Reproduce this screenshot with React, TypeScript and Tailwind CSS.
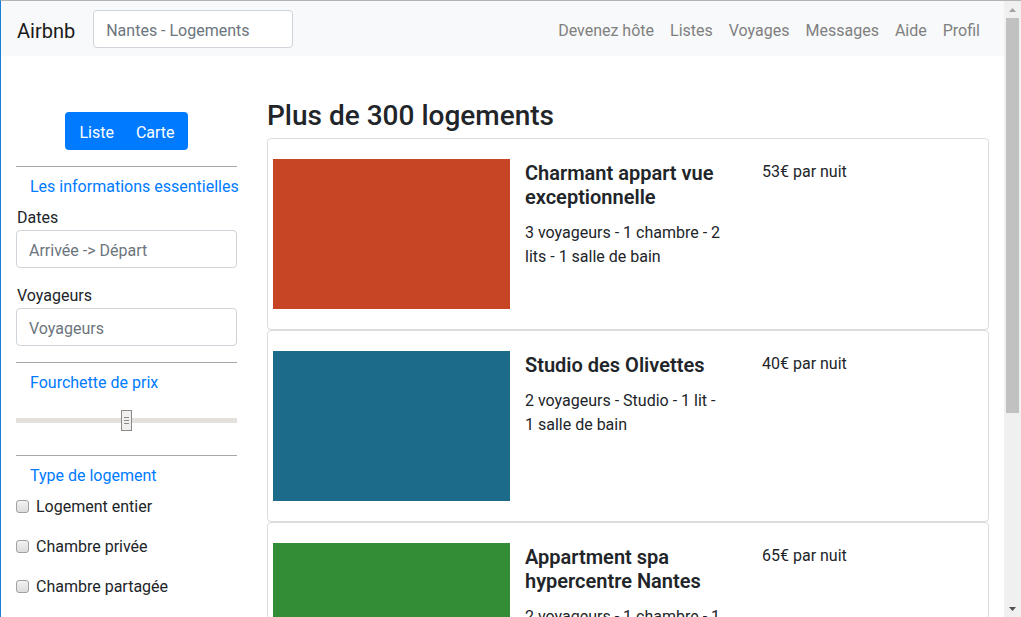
import React from "react";

const listings = [
  {
    title: "Charmant appart vue exceptionnelle",
    details: "3 voyageurs - 1 chambre - 2 lits - 1 salle de bain",
    price: "53€ par nuit",
    color: "bg-[#c74525]",
  },
  {
    title: "Studio des Olivettes",
    details: "2 voyageurs - Studio - 1 lit - 1 salle de bain",
    price: "40€ par nuit",
    color: "bg-[#1d6b8a]",
  },
  {
    title: "Appartment spa hypercentre Nantes",
    details: "2 voyageurs - 1 chambre - 1 lit - 1 salle de bain",
    price: "65€ par nuit",
    color: "bg-[#338c36]",
  },
];

const navLinks = ["Devenez hôte", "Listes", "Voyages", "Messages", "Aide", "Profil"];

function Navbar() {
  return (
    <nav className="flex h-[55px] shrink-0 items-center bg-[#f8f9fa] px-4">
      <span className="mr-[18px] pt-[4px] text-[20px] leading-[30px] text-[#1a1a1a]">Airbnb</span>
      <div className="flex h-[38px] w-[200px] items-center rounded border border-[#ced4da] bg-white px-3 pt-[4px] text-[#6c757d]">
        Nantes - Logements
      </div>
      <ul className="ml-auto flex">
        {navLinks.map((link) => (
          <li key={link} className="px-2 pt-[4px] text-[#808080]">
            {link}
          </li>
        ))}
      </ul>
    </nav>
  );
}

function SectionTitle({ children }: { children: React.ReactNode }) {
  return <div className="whitespace-nowrap pl-[14px] pt-px text-[#007bff]">{children}</div>;
}

function Checkbox({ label }: { label: string }) {
  return (
    <label className="flex h-[40px] items-start">
      <span className="mt-[4px] h-[13px] w-[13px] rounded-[3px] border border-[#a0a0a0] bg-gradient-to-b from-[#f2f2f2] to-[#dcdcdc]" />
      <span className="ml-[7px] leading-[21px] text-[#212529]">{label}</span>
    </label>
  );
}

function Sidebar() {
  return (
    <aside className="w-[221px] shrink-0 pt-[56px]">
      <div className="flex justify-center">
        <div className="flex h-[38px] items-center rounded bg-[#007bff] pt-[4px] text-white">
          <span className="pl-[14px] pr-[12px]">Liste</span>
          <span className="pl-[10px] pr-[13px]">Carte</span>
        </div>
      </div>
      <hr className="mt-4 border-t border-[#a8a8a8]" />
      <div className="pt-[7px]">
        <SectionTitle>Les informations essentielles</SectionTitle>
        <div className="mt-[7px] pl-px leading-[24px]">Dates</div>
        <div className="flex h-[38px] items-center rounded border border-[#ced4da] px-3 pt-[4px] text-[#6c757d]">
          Arrivée -&gt; Départ
        </div>
        <div className="mt-[16px] pl-px leading-[24px]">Voyageurs</div>
        <div className="flex h-[38px] items-center rounded border border-[#ced4da] px-3 pt-[4px] text-[#6c757d]">
          Voyageurs
        </div>
      </div>
      <hr className="mt-4 border-t border-[#a8a8a8]" />
      <div className="pt-[7px]">
        <SectionTitle>Fourchette de prix</SectionTitle>
        <div className="relative mt-[15px] h-[21px]">
          <div className="absolute left-0 right-0 top-[8px] h-[5px] bg-[#e4e1dc]" />
          <div className="absolute left-[105px] top-0 flex h-[21px] w-[11px] flex-col items-center justify-center gap-[2px] border border-[#8c8a88] bg-[#f0efed]">
            <span className="h-px w-[5px] bg-[#8c8a88]" />
            <span className="h-px w-[5px] bg-[#8c8a88]" />
            <span className="h-px w-[5px] bg-[#8c8a88]" />
          </div>
        </div>
      </div>
      <hr className="mt-[24px] border-t border-[#a8a8a8]" />
      <div className="pt-[7px]">
        <SectionTitle>Type de logement</SectionTitle>
        <div className="mt-[8px]">
          <Checkbox label="Logement entier" />
          <Checkbox label="Chambre privée" />
          <Checkbox label="Chambre partagée" />
        </div>
      </div>
    </aside>
  );
}

function ListingCard({ title, details, price, color }: (typeof listings)[number]) {
  return (
    <div className="flex h-[192px] shrink-0 items-start rounded border border-[#dcdcdc] pl-[5px] pt-[20px]">
      <div className={`h-[150px] w-[237px] shrink-0 ${color}`} />
      <div className="ml-[15px] w-[202px] shrink-0 pt-[2px]">
        <h5 className="text-[20px] font-semibold leading-[24px] text-[#212529]">{title}</h5>
        <p className="mt-[12px] leading-[24px] text-[#212529]">{details}</p>
      </div>
      <div className="ml-[35px] pt-[1px] leading-[24px] text-[#212529]">{price}</div>
    </div>
  );
}

function Scrollbar() {
  return (
    <div className="flex w-[17px] shrink-0 flex-col bg-[#f0f0f0]">
      <div className="flex h-[17px] items-center justify-center">
        <svg width="7" height="4" viewBox="0 0 7 4">
          <path d="M0 4 L3.5 0 L7 4 Z" fill="#a3a3a3" />
        </svg>
      </div>
      <div className="mx-[2px] h-[395px] bg-[#c1c1c1]" />
      <div className="flex-1" />
      <div className="flex h-[17px] items-center justify-center">
        <svg width="7" height="4" viewBox="0 0 7 4">
          <path d="M0 0 L7 0 L3.5 4 Z" fill="#505050" />
        </svg>
      </div>
    </div>
  );
}

export default function App() {
  return (
    <div
      className="flex h-[617px] w-[1021px] overflow-hidden border-l border-t border-l-[#1a7fd4] border-t-[#b4b4b4] bg-white text-[16px] text-[#212529]"
      style={{ fontFamily: "Roboto, 'Noto Sans', sans-serif" }}
    >
      <div className="flex min-w-0 flex-1 flex-col">
        <Navbar />
        <div className="flex gap-[30px] px-[15px]">
          <Sidebar />
          <main className="flex w-[722px] flex-col pt-[43px]">
            <h3 className="text-[28px] font-medium leading-[34px] text-[#212529]">Plus de 300 logements</h3>
            <div className="mt-[5px] flex flex-col">
              {listings.map((l) => (
                <ListingCard key={l.title} {...l} />
              ))}
            </div>
          </main>
        </div>
      </div>
      <Scrollbar />
    </div>
  );
}
